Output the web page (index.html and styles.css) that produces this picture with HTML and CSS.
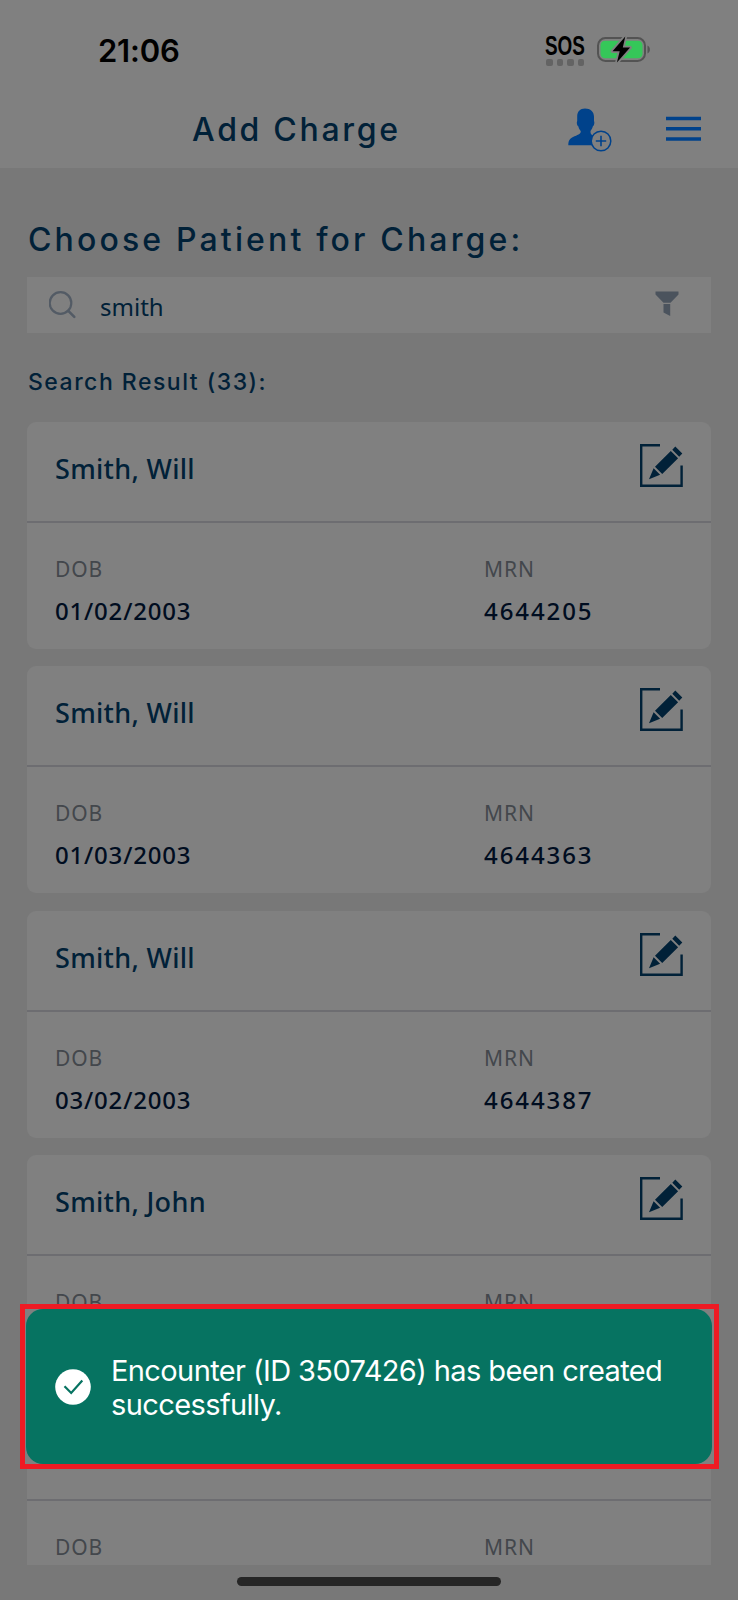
FILE: index.html
```
<!DOCTYPE html>
<html lang="en">
<head>
  <meta charset="UTF-8">
  <title>Add Charge</title>
  <link rel="stylesheet" href="styles.css">
</head>
<body>
  <svg width="0" height="0" class="sprite">
    <symbol id="icon-edit" viewBox="0 0 43 43">
      <path d="M20 1.2H1.2v40.6h40.4V21.5" fill="none" stroke="#012138" stroke-width="2.4"/>
      <path d="M9 35.2l4.600-11 6.500 6.500zM15 22.800L30.800 7l7.300 7.300-15.900 15.800zM32.300 5.800l3-3.200 7 7-3.100 3.200z" fill="#012138"/>
    </symbol>
  </svg>

  <div class="phone">
    <div class="status-bar">
      <span class="time">21:06</span>
      <div class="sos">
        <span class="sos-text">SOS</span>
        <div class="dots"><i></i><i></i><i></i><i></i></div>
      </div>
      <svg class="battery" width="54" height="30" viewBox="0 0 54 30">
        <rect x="1" y="3" width="47" height="23" rx="7.5" fill="none" stroke="#535353" stroke-width="2"/>
        <rect x="3.5" y="5.800" width="42" height="17.400" rx="4.500" fill="#35c759"/>
        <path d="M50.500 10.500c3.200 1.500 3.200 6.500 0 8z" fill="#535353"/>
        <path d="M28.300 1.500L15.500 16.200h7.200l-2.800 11.300 13.200-15h-7.300z" fill="#000" stroke="#808080" stroke-width="3.500" stroke-linejoin="round" paint-order="stroke"/>
      </svg>
    </div>

    <div class="header">
      <h1>Add Charge</h1>
      <svg class="add-patient" width="44" height="44" viewBox="0 0 44 44">
        <path d="M17 .5c5.500 0 9 3.200 9 8.300v4.200c.8 1.500.2 4.500-1.200 5.500-.6 2-1.300 3.300-2.300 4.500 0 3 .8 4 4 5.200l8 3.500v5.600H.3c0-5.300 2-7.300 6.200-9C11 26.500 13 25.500 12.700 23c-1.100-1.200-1.800-2.500-2.300-4.500-1.500-1-2-4-1.200-5.500V8.500C9.200 3.500 12 .5 17 .5z" fill="#00428b"/>
        <circle cx="33" cy="33" r="9.800" fill="#808080" stroke="#00428b" stroke-width="1.500"/>
        <path d="M33 27.800v10.400M27.800 33h10.400" stroke="#00428b" stroke-width="1.600"/>
      </svg>
      <svg class="menu" width="35" height="26" viewBox="0 0 35 26">
        <path d="M0 2.500h35M0 12.800h35M0 23.100h35" stroke="#00428b" stroke-width="3.500"/>
      </svg>
    </div>

    <div class="content">
      <h2>Choose Patient for Charge:</h2>
      <div class="search">
        <svg width="28" height="28" viewBox="0 0 28 28">
          <circle cx="11.500" cy="12" r="10.800" fill="none" stroke="#535b65" stroke-width="2.200"/>
          <path d="M19.300 19.800l6 6" stroke="#535b65" stroke-width="2.600" stroke-linecap="round"/>
        </svg>
        <span>smith</span>
        <svg class="filter" width="24" height="26" viewBox="0 0 24 26">
          <path d="M.5.500h23v3l-8 8.300h-7l-8-8.300zM8.500 13h6.700v12l-6.700-3.600z" fill="#4b535d"/>
        </svg>
      </div>
      <h3>Search Result (33):</h3>

      <div class="results">
        <div class="card">
          <div class="card-head">
            <span class="name">Smith, Will</span>
            <svg class="edit"><use href="#icon-edit"/></svg>
          </div>
          <div class="card-body">
            <div><label>DOB</label><b>01/02/2003</b></div>
            <div><label>MRN</label><b class="mrn">4644205</b></div>
          </div>
        </div>
        <div class="card">
          <div class="card-head">
            <span class="name">Smith, Will</span>
            <svg class="edit"><use href="#icon-edit"/></svg>
          </div>
          <div class="card-body">
            <div><label>DOB</label><b>01/03/2003</b></div>
            <div><label>MRN</label><b class="mrn">4644363</b></div>
          </div>
        </div>
        <div class="card">
          <div class="card-head">
            <span class="name">Smith, Will</span>
            <svg class="edit"><use href="#icon-edit"/></svg>
          </div>
          <div class="card-body">
            <div><label>DOB</label><b>03/02/2003</b></div>
            <div><label>MRN</label><b class="mrn">4644387</b></div>
          </div>
        </div>
        <div class="card">
          <div class="card-head">
            <span class="name">Smith, John</span>
            <svg class="edit"><use href="#icon-edit"/></svg>
          </div>
          <div class="card-body">
            <div><label>DOB</label></div>
            <div><label>MRN</label></div>
          </div>
        </div>
        <div class="card">
          <div class="card-head"></div>
          <div class="card-body">
            <div><label>DOB</label></div>
            <div><label>MRN</label></div>
          </div>
        </div>
      </div>
    </div>

    <!-- Success message -->
    <div class="toast-frame">
      <div class="toast">
        <svg width="36" height="36" viewBox="0 0 36 36">
          <circle cx="18" cy="18" r="17.800" fill="#fff"/>
          <path d="M9.500 17.200l6.700 6.800L27.300 11.500" fill="none" stroke="#067361" stroke-width="2.200"/>
        </svg>
        <p>Encounter (ID 3507426) has been created successfully.</p>
      </div>
    </div>

    <div class="home-bar"></div>
  </div>
</body>
</html>
```

FILE: styles.css
```
* {
  box-sizing: border-box;
}
body {
  margin: 0;
  background: #787878;
  color: #012138;
  font-family: 'Noto Sans', sans-serif;
}
.sprite {
  position: absolute;
}
.phone {
  position: relative;
  width: 738px;
  height: 1600px;
  overflow: hidden;
}
.status-bar {
  display: flex;
  align-items: center;
  height: 92px;
  padding: 8px 87px 0 98px;
  background: #808080;
}
.time {
  font: 600 31px Inter, sans-serif;
  letter-spacing: -0.2px;
  color: #000;
  margin-right: auto;
}
.sos {
  width: 41px;
  margin-right: 11px;
}
.sos-text {
  display: block;
  width: 60px;
  font: bold 27px/24px 'Liberation Sans', sans-serif;
  color: #000;
  transform: scaleX(0.7);
  transform-origin: 0 0;
}
.dots {
  display: flex;
  gap: 4px;
  margin: 1px 0 0 1px;
}
.dots i {
  width: 6.5px;
  height: 6.5px;
  border-radius: 2px;
  background: #636363;
}
.header {
  display: flex;
  align-items: center;
  height: 75.5px;
  padding: 0 37px 0 192px;
  background: #808080;
}
h1, h2, h3 {
  margin: 0;
  font-family: Inter, sans-serif;
  font-weight: 500;
  white-space: nowrap;
}
h1 {
  font-size: 32px;
  letter-spacing: 2.7px;
  margin-right: auto;
}
.menu {
  margin: -2px 0 0 54px;
}
.content {
  padding: 50px 27px 0;
}
h2 {
  padding-left: 1px;
  font-size: 32px;
  line-height: 44px;
  letter-spacing: 3.15px;
}
.search {
  display: flex;
  align-items: center;
  height: 56px;
  margin-top: 15.5px;
  padding: 0 32px 0 22px;
  background: #808080;
  font-size: 24px;
}
.search span {
  margin: 2px 0 0 23px;
}
.filter {
  margin: -3px 0 0 auto;
}
h3 {
  margin-top: 33px;
  padding-left: 1px;
  font-size: 23px;
  line-height: 32px;
  letter-spacing: 1.5px;
}
.results {
  height: 1143px;
  margin-top: 24px;
  overflow: hidden;
}
.card {
  height: 227px;
  margin-bottom: 17.4px;
  border-radius: 9px;
  background: #808080;
}
.card-head {
  display: flex;
  justify-content: space-between;
  height: 101px;
  padding: 22px 28px 0 28px;
  border-bottom: 2px solid #6d6d71;
}
.name {
  font-size: 27px;
  font-weight: 500;
  line-height: 49px;
  letter-spacing: 0.3px;
}
.edit {
  width: 43px;
  height: 43px;
}
.card-body {
  display: grid;
  grid-template-columns: 429px auto;
  padding: 25px 27px 0 28px;
}
label {
  display: block;
  font-size: 21px;
  line-height: 43px;
  letter-spacing: 0.9px;
  color: #43474c;
}
b {
  display: block;
  font-size: 24px;
  font-weight: 500;
  line-height: 39px;
  letter-spacing: 0.8px;
  color: #000d20;
}
.mrn {
  letter-spacing: 1.9px;
}
.toast-frame {
  position: absolute;
  top: 1304px;
  left: 20px;
  width: 699px;
  height: 165px;
  border: 5px solid #ee1b24;
  background: #808080;
  padding: 0 2px 0 1px;
}
.toast {
  display: flex;
  align-items: center;
  height: 100%;
  padding-left: 29px;
  border-radius: 17px;
  background: #067361;
  color: #fff;
}
.toast svg {
  flex-shrink: 0;
}
.toast p {
  margin: 3px 20px 0;
  font: 400 29px/34.5px Inter, sans-serif;
  letter-spacing: -0.6px;
}
.home-bar {
  position: absolute;
  left: 237px;
  bottom: 14px;
  width: 264px;
  height: 9px;
  border-radius: 5px;
  background: #262626;
}
```
